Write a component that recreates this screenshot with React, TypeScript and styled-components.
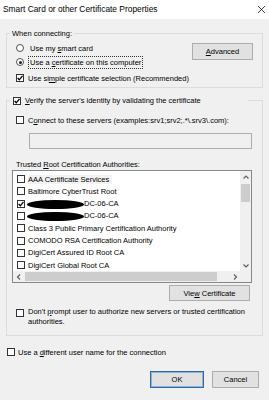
import React from 'react';
import styled, { createGlobalStyle } from 'styled-components';

const GlobalStyle = createGlobalStyle`
  html, body {
    margin: 0;
    padding: 0;
    background: #f0f0f0;
  }
  body {
    font-family: "Liberation Sans", Arial, sans-serif;
  }
`;

const Window = styled.div`
  width: 269px;
  height: 400px;
  background: #f0f0f0;
  font-family: "Liberation Sans", Arial, sans-serif;
  font-size: 7.5px;
  line-height: 9px;
  color: #000;
  display: flex;
  flex-direction: column;
  overflow: hidden;
`;

const TitleBar = styled.div`
  flex: none;
  height: 19px;
  background: #fff;
  display: flex;
  align-items: center;
  justify-content: space-between;
  padding: 0 3px 0 3px;
  font-size: 8.4px;
`;

const Body = styled.div`
  flex: 1;
  display: flex;
  flex-direction: column;
  padding: 10px 6px 0 6px;
`;

const Group = styled.fieldset<{ $top?: number }>`
  margin: ${(p) => p.$top ?? 0}px 0 0 0;
  padding: 0;
  border: 1px solid #dcdcdc;
  min-width: 0;
`;

const Legend = styled.legend<{ $width?: number }>`
  margin-left: 3px;
  padding: 0 2px;
  line-height: 9px;
  display: flex;
  align-items: center;
  gap: 4px;
  width: ${(p) => (p.$width ? `${p.$width}px` : 'auto')};
  box-sizing: border-box;
`;

const ConnectContent = styled.div`
  display: flex;
  justify-content: space-between;
  align-items: flex-start;
  padding: 4px 9px 3px 9px;
`;

const OptionList = styled.div`
  display: flex;
  flex-direction: column;
`;

const OptionRow = styled.div<{ $top?: number; $gap?: number; $left?: number }>`
  display: flex;
  align-items: center;
  height: 12px;
  gap: ${(p) => p.$gap ?? 4}px;
  margin-top: ${(p) => p.$top ?? 0}px;
  margin-left: ${(p) => p.$left ?? 0}px;
`;

const FocusLabel = styled.span`
  outline: 1px dotted #333;
  outline-offset: 1px;
`;

const Radio = styled.span<{ $on?: boolean }>`
  flex: none;
  width: 6px;
  height: 6px;
  border: 1px solid #555;
  border-radius: 50%;
  background: #fff;
  display: flex;
  align-items: center;
  justify-content: center;
  margin-right: 1px;
  &::after {
    content: '';
    width: 3px;
    height: 3px;
    border-radius: 50%;
    background: ${(p) => (p.$on ? '#222' : 'transparent')};
  }
`;

const Box = styled.span`
  flex: none;
  width: 6px;
  height: 6px;
  border: 1px solid #333;
  background: #fff;
  display: flex;
  align-items: center;
  justify-content: center;
`;

const Button = styled.div<{ $w: number; $h?: number; $top?: number; $default?: boolean }>`
  flex: none;
  width: ${(p) => p.$w}px;
  height: ${(p) => p.$h ?? 16}px;
  margin-top: ${(p) => p.$top ?? 0}px;
  box-sizing: border-box;
  background: #e1e1e1;
  border: 1px solid ${(p) => (p.$default ? '#2c6aa8' : '#adadad')};
  box-shadow: ${(p) => (p.$default ? 'inset 0 0 0 1px #8fb4d8' : 'none')};
  display: flex;
  align-items: center;
  justify-content: center;
`;

const GroupContent = styled.div`
  display: flex;
  flex-direction: column;
  padding: 0 9px 9px 9px;
`;

const TextBox = styled.div`
  margin: 7px 0 0 13px;
  width: 223px;
  height: 16px;
  box-sizing: border-box;
  border: 1px solid #adadad;
  background: #f0f0f0;
`;

const Label = styled.div`
  margin-top: 11px;
  line-height: 9px;
`;

const ListBox = styled.div`
  margin: 1px 0 0 -4px;
  width: 240px;
  height: 113px;
  box-sizing: border-box;
  border: 1px solid #828790;
  background: #fff;
  display: grid;
  grid-template-columns: 1fr 11px;
  grid-template-rows: 1fr 11px;
`;

const Items = styled.div`
  padding-top: 2px;
  overflow: hidden;
`;

const Item = styled.div<{ $focus?: boolean }>`
  height: 12.3px;
  display: flex;
  align-items: center;
  gap: 3px;
  padding-left: 4px;
  white-space: nowrap;
  & > span:last-child {
    background: ${(p) => (p.$focus ? '#f2f2f2' : 'transparent')};
    padding-right: ${(p) => (p.$focus ? '3px' : '0')};
  }
`;

const Redacted = styled.span`
  display: inline-block;
  width: 57px;
  height: 9px;
  background: #000;
  border-radius: 50% / 50%;
  margin-left: -1px;
  margin-right: 0;
  vertical-align: middle;
`;

const ScrollV = styled.div`
  background: #f0f0f0;
  display: flex;
  flex-direction: column;
  align-items: center;
`;

const ScrollH = styled.div`
  background: #f0f0f0;
  display: flex;
  align-items: center;
`;

const Arrow = styled.div`
  flex: none;
  width: 11px;
  height: 11px;
  display: flex;
  align-items: center;
  justify-content: center;
`;

const ThumbV = styled.div`
  width: 9px;
  height: 18px;
  margin-top: 2px;
  background: #cdcdcd;
`;

const ThumbH = styled.div`
  height: 9px;
  width: 192px;
  margin-left: 1px;
  background: #cdcdcd;
`;

const Corner = styled.div`
  background: #f0f0f0;
`;

const PromptRow = styled.div`
  display: flex;
  align-items: flex-start;
  gap: 4px;
  margin-top: 6px;
  line-height: 9.5px;
  & > span:first-child {
    margin-top: 2px;
  }
`;

const Footer = styled.div`
  display: flex;
  justify-content: flex-end;
  gap: 8px;
  margin-top: 13px;
  padding-right: 4px;
`;

const Chevron = ({ dir }: { dir: 'up' | 'down' | 'left' | 'right' }) => {
  const d = {
    up: 'M1.5 5.5 L4 3 L6.5 5.5',
    down: 'M1.5 2.5 L4 5 L6.5 2.5',
    left: 'M5 1.5 L2.5 4 L5 6.5',
    right: 'M3 1.5 L5.5 4 L3 6.5',
  }[dir];
  return (
    <svg width="8" height="8" viewBox="0 0 8 8">
      <path d={d} fill="none" stroke="#606060" strokeWidth="1.2" />
    </svg>
  );
};

const Check = () => (
  <svg width="6" height="6" viewBox="0 0 6 6">
    <path d="M0.6 3 L2.3 4.8 L5.5 0.8" fill="none" stroke="#000" strokeWidth="1.3" />
  </svg>
);

const CheckBox = ({ on }: { on?: boolean }) => <Box>{on && <Check />}</Box>;

const certs: { name: React.ReactNode; on?: boolean; focus?: boolean }[] = [
  { name: 'AAA Certificate Services', focus: true },
  { name: 'Baltimore CyberTrust Root' },
  { name: <><Redacted />DC-06-CA</>, on: true },
  { name: <><Redacted />DC-06-CA</> },
  { name: 'Class 3 Public Primary Certification Authority' },
  { name: 'COMODO RSA Certification Authority' },
  { name: 'DigiCert Assured ID Root CA' },
  { name: 'DigiCert Global Root CA' },
];

export default function App() {
  return (
    <Window>
      <GlobalStyle />
      <TitleBar>
        <span>Smart Card or other Certificate Properties</span>
        <svg width="9" height="9" viewBox="0 0 9 9">
          <path d="M1 1 L8 8 M8 1 L1 8" stroke="#111" strokeWidth="0.8" />
        </svg>
      </TitleBar>
      <Body>
        <Group>
          <Legend>When connecting:</Legend>
          <ConnectContent>
            <OptionList>
              <OptionRow $gap={5}>
                <Radio />
                <span>Use my <u>s</u>mart card</span>
              </OptionRow>
              <OptionRow $top={2} $gap={5}>
                <Radio $on />
                <FocusLabel>Use a <u>c</u>ertificate on this computer</FocusLabel>
              </OptionRow>
              <OptionRow $top={4}>
                <CheckBox on />
                <span>Use si<u>m</u>ple certificate selection (Recommended)</span>
              </OptionRow>
            </OptionList>
            <Button $w={61} $h={17} $top={1}>
              <span><u>A</u>dvanced</span>
            </Button>
          </ConnectContent>
        </Group>

        <Group $top={8}>
          <Legend $width={238}>
            <span style={{ marginLeft: 1, display: 'flex' }}>
              <CheckBox on />
            </span>
            <span><u>V</u>erify the server's identity by validating the certificate</span>
          </Legend>
          <GroupContent>
            <OptionRow $top={9}>
              <CheckBox />
              <span>C<u>o</u>nnect to these servers (examples:srv1;srv2;.*\.srv3\.com):</span>
            </OptionRow>
            <TextBox />
            <Label>Trusted <u>R</u>oot Certification Authorities:</Label>
            <ListBox>
              <Items>
                {certs.map((c, i) => (
                  <Item key={i} $focus={c.focus}>
                    <CheckBox on={c.on} />
                    <span>{c.name}</span>
                  </Item>
                ))}
              </Items>
              <ScrollV>
                <Arrow><Chevron dir="up" /></Arrow>
                <ThumbV />
                <div style={{ flex: 1 }} />
                <Arrow><Chevron dir="down" /></Arrow>
              </ScrollV>
              <ScrollH>
                <Arrow><Chevron dir="left" /></Arrow>
                <ThumbH />
                <div style={{ flex: 1 }} />
                <Arrow><Chevron dir="right" /></Arrow>
              </ScrollH>
              <Corner />
            </ListBox>
            <OptionRow $top={2} $left={153} style={{ height: 'auto' }}>
              <Button $w={81}>
                <span>Vie<u>w</u> Certificate</span>
              </Button>
            </OptionRow>
            <PromptRow>
              <CheckBox />
              <span>
                Don't <u>p</u>rompt user to authorize new servers or trusted certification
                <br />
                authorities.
              </span>
            </PromptRow>
          </GroupContent>
        </Group>

        <OptionRow $top={10} $left={1} $gap={3}>
          <CheckBox />
          <span>Use a <u>d</u>ifferent user name for the connection</span>
        </OptionRow>

        <Footer>
          <Button $w={54} $h={17} $default>OK</Button>
          <Button $w={47} $h={17}>Cancel</Button>
        </Footer>
      </Body>
    </Window>
  );
}
